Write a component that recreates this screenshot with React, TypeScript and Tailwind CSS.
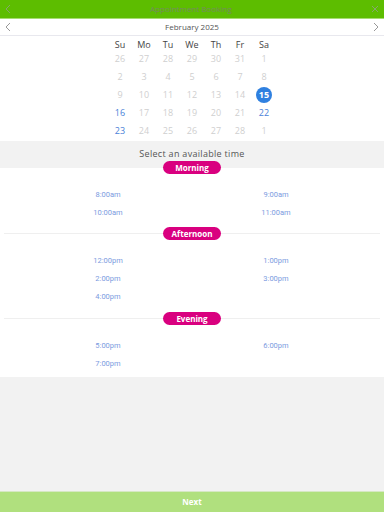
import React from 'react'

const weeks: { d: number; c: 'off' | 'on' | 'sel' }[][] = [
  [26, 27, 28, 29, 30, 31, 1].map((d) => ({ d, c: 'off' as const })),
  [2, 3, 4, 5, 6, 7, 8].map((d) => ({ d, c: 'off' as const })),
  [9, 10, 11, 12, 13, 14].map((d) => ({ d, c: 'off' as const })).concat([{ d: 15, c: 'sel' as any }]),
  [
    { d: 16, c: 'on' },
    { d: 17, c: 'off' },
    { d: 18, c: 'off' },
    { d: 19, c: 'off' },
    { d: 20, c: 'off' },
    { d: 21, c: 'off' },
    { d: 22, c: 'on' },
  ],
  [
    { d: 23, c: 'on' },
    { d: 24, c: 'off' },
    { d: 25, c: 'off' },
    { d: 26, c: 'off' },
    { d: 27, c: 'off' },
    { d: 28, c: 'off' },
    { d: 1, c: 'off' },
  ],
]

const sections = [
  { name: 'Morning', times: ['8:00am', '9:00am', '10:00am', '11:00am'] },
  { name: 'Afternoon', times: ['12:00pm', '1:00pm', '2:00pm', '3:00pm', '4:00pm'] },
  { name: 'Evening', times: ['5:00pm', '6:00pm', '7:00pm'] },
]

function Chevron({ dir, color }: { dir: 'l' | 'r'; color: string }) {
  return (
    <svg width="6" height="10" viewBox="0 0 6 10" fill="none">
      <polyline
        points={dir === 'l' ? '5,1 1,5 5,9' : '1,1 5,5 1,9'}
        stroke={color}
        strokeWidth="1"
      />
    </svg>
  )
}

function Pill({ label }: { label: string }) {
  return (
    <span className="flex h-[13px] w-[58px] items-center justify-center rounded-full bg-[#d9007f] text-[8px] font-bold leading-none text-white font-['Open_Sans',sans-serif]">
      {label}
    </span>
  )
}

function Times({ times }: { times: string[] }) {
  return (
    <div className="grid grid-cols-2 px-6">
      {times.map((t) => (
        <div
          key={t}
          className="flex h-[18px] items-center justify-center text-[7.5px] text-[#7b9be0] font-['Roboto',sans-serif]"
        >
          {t}
        </div>
      ))}
    </div>
  )
}

export default function App() {
  return (
    <div className="flex h-[512px] w-full flex-col bg-[#f2f2f2] font-['Open_Sans',sans-serif]">
      {/* header */}
      <div className="flex h-[18px] items-center justify-between bg-[#5dbd00] px-[5px]">
        <Chevron dir="l" color="#86a86a" />
        <span className="text-[8px] text-[#758a62]">Appointment Booking</span>
        <svg width="8" height="8" viewBox="0 0 8 8">
          <path d="M1 1L7 7M7 1L1 7" stroke="#86a86a" strokeWidth="1" />
        </svg>
      </div>
      <div className="h-px bg-[#a6dc70]" />

      {/* calendar */}
      <div className="bg-white">
        <div className="flex h-[17px] items-center justify-between border-b border-[#e8e8ee] px-[5px]">
          <Chevron dir="l" color="#999" />
          <span className="text-[8px] text-[#555]">February 2025</span>
          <Chevron dir="r" color="#999" />
        </div>
        <div className="mx-auto w-[168px] pb-[1px]">
          <div className="grid h-[14px] grid-cols-7 items-center pt-[2px] text-center text-[9px] text-[#444]">
            {['Su', 'Mo', 'Tu', 'We', 'Th', 'Fr', 'Sa'].map((d) => (
              <span key={d}>{d}</span>
            ))}
          </div>
          {weeks.map((w, i) => (
            <div key={i} className="grid h-[18px] grid-cols-7 items-center text-center text-[9px]">
              {w.map((x, j) => (
                <div key={j} className="flex justify-center">
                  {x.c === 'sel' ? (
                    <span className="flex h-4 w-4 items-center justify-center rounded-full bg-[#2f80e0] font-bold text-white">
                      {x.d}
                    </span>
                  ) : (
                    <span className={x.c === 'on' ? 'text-[#4a7fd8]' : 'text-[#cfcfcf]'}>{x.d}</span>
                  )}
                </div>
              ))}
            </div>
          ))}
        </div>
      </div>

      {/* time selection */}
      <div className="flex h-[27px] items-center justify-center pb-[1px] text-[9px] tracking-[0.3px] text-[#555]">
        Select an available time
      </div>
      <div className="bg-white pb-[4px]">
        <div className="-mt-[7px] flex justify-center">
          <Pill label="Morning" />
        </div>
        <div className="pt-[12px] pb-[5px]">
          <Times times={sections[0].times} />
        </div>
        <div className="flex items-center px-1">
          <div className="h-px flex-1 bg-[#efefef]" />
          <Pill label="Afternoon" />
          <div className="h-px flex-1 bg-[#efefef]" />
        </div>
        <div className="pt-[12px] pb-[6px]">
          <Times times={sections[1].times} />
        </div>
        <div className="flex items-center px-1">
          <div className="h-px flex-1 bg-[#efefef]" />
          <Pill label="Evening" />
          <div className="h-px flex-1 bg-[#efefef]" />
        </div>
        <div className="pt-[12px]">
          <Times times={sections[2].times} />
        </div>
      </div>

      <div className="flex-1" />
      <div className="h-px bg-[#d6e8c4]" />
      <div className="flex h-[20px] items-center justify-center bg-[#b0e07e] text-[8px] font-bold text-white">
        Next
      </div>
    </div>
  )
}
